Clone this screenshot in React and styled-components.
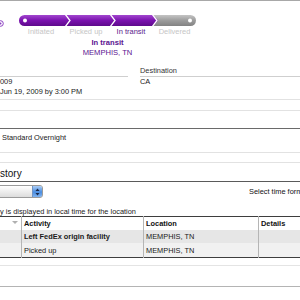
import React from 'react';
import styled, { createGlobalStyle } from 'styled-components';

const Global = createGlobalStyle`
  html, body { margin: 0; padding: 0; background: #fff; }
  body {
    width: 300px; height: 300px; overflow: hidden;
    font-family: "Liberation Sans", Arial, sans-serif;
    font-size: 7.4px; color: #222;
  }
`;

const Page = styled.div`
  width: 300px;
  border-top: 1px solid #a8a8a8;
`;

const Tracker = styled.div`
  display: flex;
  padding-top: 14px;
`;

const HelpSlot = styled.div`
  width: 19px;
  padding-top: 5px;
`;

const BarCol = styled.div`
  width: 177px;
  display: flex;
  flex-direction: column;
`;

const Steps = styled.div`
  display: flex;
  height: 9px;
  line-height: 9px;
  margin-top: 1px;
`;

const Step = styled.div`
  width: ${p => p.$w}px;
  text-align: center;
  white-space: nowrap;
  color: ${p => (p.$active ? '#5a1a8c' : '#c6c6c6')};
  font-size: 7.5px;
`;

const Status = styled.div`
  margin-top: 2px;
  text-align: center;
  color: #5b1390;
  font-size: 7.6px;
  line-height: 9.5px;
`;

const StatusTitle = styled.div`
  font-weight: bold;
`;

const InfoGrid = styled.div`
  display: grid;
  grid-template-columns: 128px 160px;
  column-gap: 12px;
  margin-top: 9px;
`;

const InfoCol = styled.div`
  display: flex;
  flex-direction: column;
`;

const InfoLabel = styled.div`
  height: 10px;
  line-height: 9px;
  border-bottom: 1px solid #cfcfcf;
  color: #333;
`;

const InfoValue = styled.div`
  line-height: 10px;
  white-space: nowrap;
  color: #1a1a1a;
`;

const Rule = styled.div`
  height: 0;
  border-top: 1px solid ${p => p.$color};
  margin-top: ${p => p.$gap}px;
`;

const Service = styled.div`
  margin-top: 4px;
  padding-left: 2px;
  line-height: 10px;
  color: #1a1a1a;
`;

const Heading = styled.div`
  font-size: 10px;
  line-height: 12px;
  margin-top: 5px;
  color: #111;
`;

const ToolRow = styled.div`
  display: flex;
  justify-content: space-between;
  align-items: flex-start;
  margin-top: 3px;
  height: 13px;
`;

const Select = styled.div`
  width: 47px;
  height: 11px;
  margin-left: -6px;
  border: 1px solid #9a9a9a;
  border-radius: 3px;
  background: linear-gradient(#ffffff, #dcdcdc);
  display: flex;
  justify-content: flex-end;
  overflow: hidden;
`;

const SelectButton = styled.div`
  width: 9px;
  height: 11px;
  background: linear-gradient(#a9cdf7, #4b8de0 55%, #7fb3f0);
  border-left: 1px solid #6f93c4;
  display: flex;
  align-items: center;
  justify-content: center;
`;

const TimeLabel = styled.div`
  margin-top: 2px;
  white-space: nowrap;
  width: 51px;
  overflow: hidden;
  color: #111;
`;

const Note = styled.div`
  margin-top: 9px;
  line-height: 9px;
  color: #1a1a1a;
  white-space: nowrap;
`;

const Table = styled.table`
  width: 300px;
  border-collapse: collapse;
  table-layout: fixed;
  border-top: 1px solid #3e3e3e;
  border-bottom: 1px solid #3e3e3e;
`;

const HeadCell = styled.th`
  width: ${p => p.$w}px;
  height: 13px;
  padding: 0 0 0 2px;
  text-align: left;
  font-weight: bold;
  font-size: 7.4px;
  color: #111;
  background: #fff;
  border-left: ${p => (p.$first ? 'none' : '1px solid #b5b5b5')};
  position: relative;
`;

const Row = styled.tr`
  background: ${p => p.$bg};
`;

const Cell = styled.td`
  height: ${p => p.$h}px;
  padding: 0 0 0 2px;
  font-size: 7.4px;
  font-weight: ${p => (p.$bold ? 'bold' : 'normal')};
  color: #1a1a1a;
  white-space: nowrap;
  overflow: hidden;
  border-left: ${p => (p.$first ? 'none' : '1px solid #b5b5b5')};
`;

const SortMark = styled.span`
  position: absolute;
  right: 3px;
  top: 4px;
  width: 0;
  height: 0;
  border-left: 3px solid transparent;
  border-right: 3px solid transparent;
  border-top: 3px solid #b0b0b0;
`;

function ProgressBar() {
  const h = 11;
  const chevrons = [47, 92, 134];
  return (
    <svg width="177" height={h} viewBox={`0 0 177 ${h}`} style={{ display: 'block' }}>
      <defs>
        <linearGradient id="pg" x1="0" y1="0" x2="0" y2="1">
          <stop offset="0" stopColor="#a247cf" />
          <stop offset="0.5" stopColor="#7a12ae" />
          <stop offset="1" stopColor="#5e0a8c" />
        </linearGradient>
        <linearGradient id="gg" x1="0" y1="0" x2="0" y2="1">
          <stop offset="0" stopColor="#c4c4c4" />
          <stop offset="0.5" stopColor="#9c9c9c" />
          <stop offset="1" stopColor="#828282" />
        </linearGradient>
        <clipPath id="pill">
          <rect x="0" y="0" width="177" height={h} rx="5.5" />
        </clipPath>
      </defs>
      <g clipPath="url(#pill)">
        <rect x="0" y="0" width="140" height={h} fill="url(#pg)" />
        <polygon points={`134,0 177,0 177,${h} 134,${h} 139,5.5`} fill="url(#gg)" />
        <polygon points={`130,0 134,0 139,5.5 134,${h} 130,${h} 135,5.5`} fill="url(#pg)" />
        {chevrons.map(x => (
          <polyline
            key={x}
            points={`${x - 1},-1 ${x + 4},5.5 ${x - 1},${h + 1}`}
            fill="none"
            stroke="#fff"
            strokeWidth="1.3"
          />
        ))}
      </g>
      <circle cx="6" cy="5.5" r="2" fill="#fff" />
      <circle cx="171" cy="5.5" r="2" fill="#fff" />
    </svg>
  );
}

function HelpIcon() {
  return (
    <svg width="4" height="7" viewBox="0 0 4 7" style={{ display: 'block' }}>
      <circle cx="0.5" cy="3.5" r="2.8" fill="none" stroke="#8a3fc0" strokeWidth="1" />
      <circle cx="0.5" cy="3.5" r="1" fill="#8a3fc0" />
    </svg>
  );
}

function Arrows() {
  return (
    <svg width="5" height="8" viewBox="0 0 5 8" style={{ display: 'block' }}>
      <polygon points="2.5,0.5 4.5,3 0.5,3" fill="#1b2a4a" />
      <polygon points="2.5,7.5 4.5,5 0.5,5" fill="#1b2a4a" />
    </svg>
  );
}

const steps = [
  { label: 'Initiated', w: 44 },
  { label: 'Picked up', w: 46 },
  { label: 'In transit', w: 44, active: true },
  { label: 'Delivered', w: 43 },
];

export default function App() {
  return (
    <>
      <Global />
      <Page>
        <Tracker>
          <HelpSlot>
            <HelpIcon />
          </HelpSlot>
          <BarCol>
            <ProgressBar />
            <Steps>
              {steps.map(s => (
                <Step key={s.label} $w={s.w} $active={s.active}>
                  {s.label}
                </Step>
              ))}
            </Steps>
            <Status>
              <StatusTitle>In transit</StatusTitle>
              <div>MEMPHIS, TN</div>
            </Status>
          </BarCol>
        </Tracker>

        <InfoGrid>
          <InfoCol>
            <InfoLabel />
            <InfoValue>009</InfoValue>
            <InfoValue>Jun 19, 2009 by 3:00 PM</InfoValue>
          </InfoCol>
          <InfoCol>
            <InfoLabel>Destination</InfoLabel>
            <InfoValue>CA</InfoValue>
          </InfoCol>
        </InfoGrid>

        <Rule $color="#e2e2e2" $gap={2} />
        <Rule $color="#e2e2e2" $gap={10} />
        <Rule $color="#6a6a6a" $gap={17} />

        <Service>Standard Overnight</Service>

        <Rule $color="#e2e2e2" $gap={9} />
        <Rule $color="#e2e2e2" $gap={9} />

        <Heading>story</Heading>
        <Rule $color="#5a5a5a" $gap={1} />

        <ToolRow>
          <Select>
            <SelectButton>
              <Arrows />
            </SelectButton>
          </Select>
          <TimeLabel>Select time format</TimeLabel>
        </ToolRow>

        <Note>y is displayed in local time for the location</Note>

        <Table>
          <thead>
            <tr>
              <HeadCell $w={19} $first>
                <SortMark />
              </HeadCell>
              <HeadCell $w={119}>Activity</HeadCell>
              <HeadCell $w={112}>Location</HeadCell>
              <HeadCell $w={50}>Details</HeadCell>
            </tr>
          </thead>
          <tbody>
            <Row $bg="#e6e6e6">
              <Cell $h={13} $first />
              <Cell $h={13} $bold>Left FedEx origin facility</Cell>
              <Cell $h={13}>MEMPHIS, TN</Cell>
              <Cell $h={13} />
            </Row>
            <Row $bg="#f1f1f1">
              <Cell $h={14} $first />
              <Cell $h={14}>Picked up</Cell>
              <Cell $h={14}>MEMPHIS, TN</Cell>
              <Cell $h={14} />
            </Row>
          </tbody>
        </Table>

        <Rule $color="#e4e4e4" $gap={7} />
        <Rule $color="#b4b4b4" $gap={20} />
      </Page>
    </>
  );
}
